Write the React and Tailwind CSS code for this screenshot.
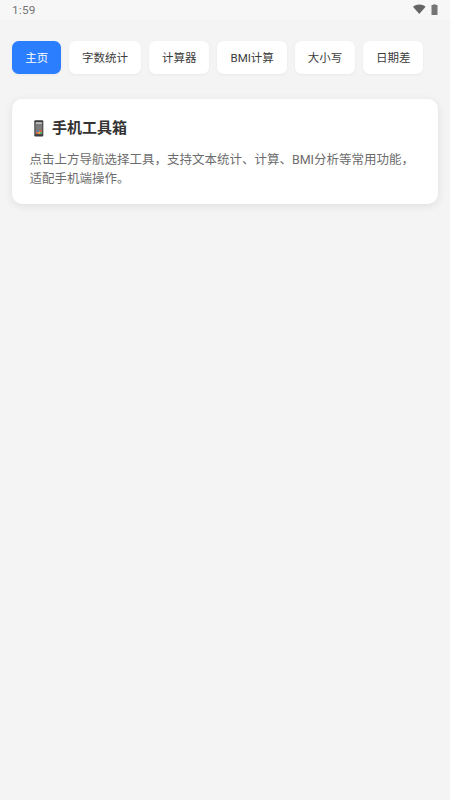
const tabs = [
  { label: '主页', width: 'w-[48.6px]', active: true },
  { label: '字数统计', width: 'w-[72px]' },
  { label: '计算器', width: 'w-[60.2px]' },
  { label: 'BMI计算', width: 'w-[69.4px]' },
  { label: '大小写', width: 'w-[60.2px]' },
  { label: '日期差', width: 'w-[60.2px]' },
];

function StatusBar() {
  return (
    <header className="flex h-5 items-center justify-between bg-[#f7f7f7] pr-[12px] pl-[12px] text-[#757575]">
      <span className="text-[11.8px] leading-5 tracking-[0.2px]">1:59</span>
      <div className="-mt-[2px] flex items-center gap-[5px]">
        <svg className="h-[10px] w-[13px]" viewBox="0 0 13 10" fill="#656565">
          <path d="M0 2.7C3.7-.4 9.1-.4 12.6 2.7L6.3 10Z" />
        </svg>
        <svg className="h-[11px] w-[7px]" viewBox="0 0 7 11">
          <path d="M2.2 0h2.6v1.5H2.2z" fill="#a0a0a0" />
          <rect y="1" x="0.5" width="6" height="10" rx="0.6" fill="#757575" />
        </svg>
      </div>
    </header>
  );
}

function PhoneIcon() {
  return (
    <svg className="h-[17px] w-[10px] shrink-0" viewBox="0 0 10 17">
      <rect x="0.3" y="0.2" width="9" height="16.4" rx="1.1" fill="#3b3b3b" />
      <rect x="1.3" y="2" width="7" height="12.3" fill="#7b7b7b" />
      <rect x="2" y="2.2" width="5.8" height="1.8" fill="#bbbebe" />
      <path d="M3 10h2.4v1.8H3z" fill="#4289c8" />
      <path d="M5.4 10h2.6v1.8H5.4z" fill="#ef583d" />
      <path d="M2 11.8h2.2v1.9H2z" fill="#df6044" />
      <path d="M4.2 11.8h2v1.9h-2z" fill="#f0ac3c" />
      <path d="M6.2 11.8H8v1.9H6.2z" fill="#4db866" />
    </svg>
  );
}

export default function App() {
  return (
    <div className="min-h-screen bg-[#f4f4f4] font-[Roboto,'Noto_Sans_CJK_SC',sans-serif]">
      <StatusBar />
      <nav className="flex gap-[8.1px] pt-[21px] pl-[12.4px]">
        {tabs.map((tab) => (
          <button
            key={tab.label}
            className={`${tab.width} ${tab.active ? 'bg-[#2b7fff] text-white' : 'bg-white text-[#3c3c3c]'} h-[33px] shrink-0 rounded-[6.6px] pt-px text-center text-[11.5px] leading-[32px] whitespace-nowrap shadow-[0_1px_3px_rgba(0,0,0,0.05)]`}
          >
            {tab.label}
          </button>
        ))}
      </nav>
      <main className="mx-[12.4px] mt-[25px] h-[105px] rounded-[10px] bg-white px-[17px] pt-[18px] shadow-[0_2px_8px_rgba(0,0,0,0.09)]">
        <h1 className="flex h-[22px] items-center text-[15px] leading-[22px] font-bold text-[#333]">
          <span className="mr-[8px] ml-[4.6px] flex"><PhoneIcon /></span>
          手机工具箱
        </h1>
        <p className="mt-[12px] text-[12.5px] leading-[18.5px] text-[#6c6c6c]">
          点击上方导航选择工具，支持文本统计、计算、BMI分析等常用功能，<br />
          适配手机端操作。
        </p>
      </main>
    </div>
  );
}
